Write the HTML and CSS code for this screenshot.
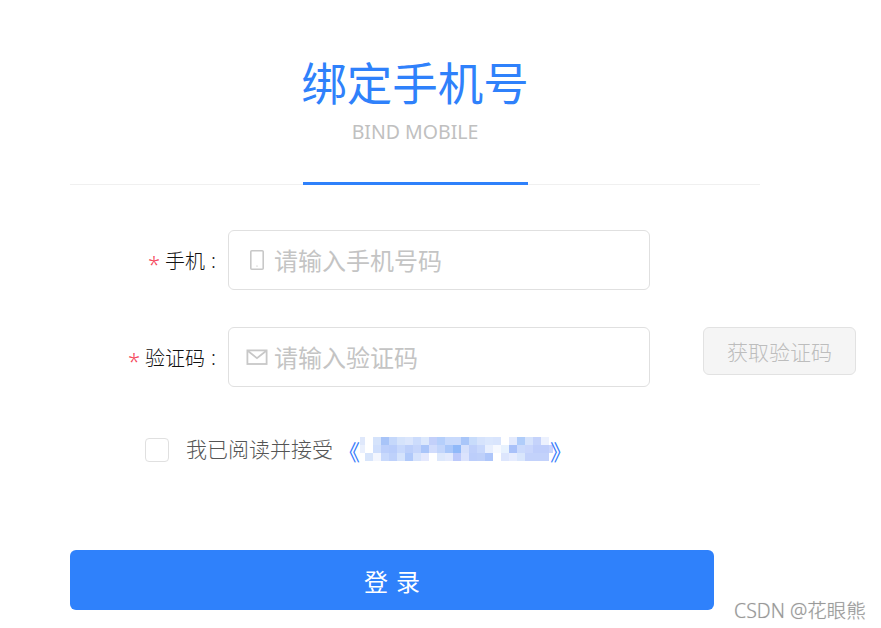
FILE: index.html
```html
<!DOCTYPE html>
<html lang="zh-CN">
<head>
  <meta charset="UTF-8">
  <title>绑定手机号</title>
  <link rel="stylesheet" href="styles.css">
</head>
<body>
  <div class="container">
    <div class="header">
      <div class="title-box">
        <h1>绑定手机号</h1>
        <p>BIND MOBILE</p>
      </div>
    </div>

    <form class="bind-form">
      <div class="form-row">
        <label class="form-label" for="mobile"><span class="required">*</span>手机<span class="colon">:</span></label>
        <div class="input-box">
          <svg class="input-icon" width="24" height="24" viewBox="0 0 24 24" fill="none" stroke="#c8c8c8" stroke-width="1.6">
            <rect x="5.8" y="2.8" width="12.4" height="18.4" rx="1"/>
            <circle cx="12" cy="18" r="0.6" fill="#b0b0b0" stroke="none"/>
          </svg>
          <input type="text" id="mobile" placeholder="请输入手机号码">
        </div>
      </div>

      <div class="form-row">
        <label class="form-label" for="code"><span class="required">*</span>验证码<span class="colon">:</span></label>
        <div class="input-box">
          <svg class="input-icon" width="24" height="24" viewBox="0 0 24 24" fill="none" stroke="#c8c8c8" stroke-width="1.8">
            <rect x="2.4" y="5.4" width="19.2" height="13.6"/>
            <path d="M2.7 5.8l9.3 7.4 9.3-7.4"/>
          </svg>
          <input type="text" id="code" placeholder="请输入验证码">
        </div>
        <button type="button" class="code-btn" disabled>获取验证码</button>
      </div>

      <div class="agree-row">
        <span class="checkbox"></span>
        <span class="agree-text">我已阅读并接受</span>
        <a class="agree-link"><span>《</span><svg class="mosaic" width="193" height="24" viewBox="0 0 193 24">
          <g>
            <rect x="0" y="0" width="5" height="8" fill="#dfe8fb"/><rect x="13" y="0" width="8" height="8" fill="#d5e3fb"/><rect x="21" y="0" width="8" height="8" fill="#a8c4f8"/><rect x="29" y="0" width="8" height="8" fill="#c5d8fb"/><rect x="37" y="0" width="8" height="8" fill="#d5e3fb"/><rect x="45" y="0" width="8" height="8" fill="#dbe6fc"/><rect x="53" y="0" width="8" height="8" fill="#ccdcfc"/><rect x="61" y="0" width="8" height="8" fill="#dce8fc"/><rect x="69" y="0" width="8" height="8" fill="#c3d0fa"/><rect x="77" y="0" width="8" height="8" fill="#b5cffb"/><rect x="85" y="0" width="8" height="8" fill="#c8dafc"/><rect x="93" y="0" width="8" height="8" fill="#c9dafc"/><rect x="101" y="0" width="8" height="8" fill="#a9c6f9"/><rect x="109" y="0" width="8" height="8" fill="#c8dcfb"/><rect x="117" y="0" width="8" height="8" fill="#d6e3fc"/><rect x="125" y="0" width="8" height="8" fill="#dbe7fd"/><rect x="133" y="0" width="8" height="8" fill="#d9e5fd"/><rect x="149" y="0" width="8" height="8" fill="#e3eafd"/><rect x="157" y="0" width="8" height="8" fill="#b0cdfa"/><rect x="165" y="0" width="8" height="8" fill="#d6e3fc"/><rect x="173" y="0" width="8" height="8" fill="#c5d3fb"/><rect x="181" y="0" width="8" height="8" fill="#ecf1fe"/>
          </g>
          <g>
            <rect x="0" y="8" width="5" height="8" fill="#eaf0fd"/><rect x="13" y="8" width="8" height="8" fill="#d0dffc"/><rect x="21" y="8" width="8" height="8" fill="#bccffb"/><rect x="29" y="8" width="8" height="8" fill="#b9cdfb"/><rect x="37" y="8" width="8" height="8" fill="#c7d8fc"/><rect x="45" y="8" width="8" height="8" fill="#bccffa"/><rect x="53" y="8" width="8" height="8" fill="#c5d5fb"/><rect x="61" y="8" width="8" height="8" fill="#aac5f9"/><rect x="69" y="8" width="8" height="8" fill="#d1dcfc"/><rect x="77" y="8" width="8" height="8" fill="#c2d5fb"/><rect x="85" y="8" width="8" height="8" fill="#a9c7fa"/><rect x="93" y="8" width="8" height="8" fill="#90b9f9"/><rect x="101" y="8" width="8" height="8" fill="#d5e0fc"/><rect x="109" y="8" width="8" height="8" fill="#bfd0fb"/><rect x="117" y="8" width="8" height="8" fill="#c8d8fc"/><rect x="125" y="8" width="8" height="8" fill="#e8effe"/><rect x="133" y="8" width="8" height="8" fill="#f6f9ff"/><rect x="141" y="8" width="8" height="8" fill="#e8f2fe"/><rect x="149" y="8" width="8" height="8" fill="#a9c1f9"/><rect x="157" y="8" width="8" height="8" fill="#cbdafc"/><rect x="165" y="8" width="8" height="8" fill="#c9d6fc"/><rect x="173" y="8" width="16" height="8" fill="#bfcefb"/><rect x="189" y="8" width="4" height="8" fill="#c9d5fc"/>
          </g>
          <g>
            <rect x="5" y="16" width="8" height="8" fill="#d8e5fb"/><rect x="13" y="16" width="8" height="8" fill="#f3f6fe"/><rect x="21" y="16" width="8" height="8" fill="#c8d9fc"/><rect x="29" y="16" width="8" height="8" fill="#bed1fb"/><rect x="37" y="16" width="8" height="8" fill="#d5e3fc"/><rect x="45" y="16" width="8" height="8" fill="#b0c9fa"/><rect x="53" y="16" width="8" height="8" fill="#d5e2fc"/><rect x="61" y="16" width="8" height="8" fill="#e4e8fd"/><rect x="77" y="16" width="8" height="8" fill="#dde8fc"/><rect x="85" y="16" width="8" height="8" fill="#e3eafd"/><rect x="93" y="16" width="8" height="8" fill="#bcc9fb"/><rect x="101" y="16" width="8" height="8" fill="#dbe3fd"/><rect x="109" y="16" width="8" height="8" fill="#bccefb"/><rect x="117" y="16" width="8" height="8" fill="#bed0fa"/><rect x="125" y="16" width="8" height="8" fill="#aec6fa"/><rect x="141" y="16" width="8" height="8" fill="#dde6fd"/><rect x="149" y="16" width="8" height="8" fill="#e6ecfe"/><rect x="157" y="16" width="8" height="8" fill="#d9e6fc"/><rect x="165" y="16" width="24" height="8" fill="#c3d2fb"/>
          </g>
        </svg><span>》</span></a>
      </div>

      <button type="button" class="login-btn">登录</button>
    </form>
  </div>

  <div class="watermark">CSDN @花眼熊</div>
</body>
</html>
```

FILE: styles.css
```css
* {
  box-sizing: border-box;
}
html, body {
  height: 628px;
  overflow: hidden;
}
body {
  font-family: "Noto Sans", "Noto Sans CJK SC", Arial, sans-serif;
  background-color: #fff;
  color: #333;
  margin: 0;
  padding: 0;
}
.container {
  width: 690px;
  margin-left: 70px;
}
.header {
  height: 185px;
  border-bottom: 1px solid #f0f0f0;
  display: flex;
  justify-content: center;
  padding-top: 51px;
}
.title-box {
  width: 225px;
  height: 134px;
  text-align: center;
  border-bottom: 3px solid #2f81fb;
}
.title-box h1 {
  margin: 0 -3px;
  font-size: 45.5px;
  line-height: 64px;
  font-weight: 400;
  color: #2f81fb;
  white-space: nowrap;
}
.title-box p {
  margin: 2px 0 0;
  font-size: 19.5px;
  line-height: 30px;
  font-weight: 400;
  color: #c0c0c0;
}
.bind-form {
  padding-top: 45px;
}
.form-row {
  display: flex;
  align-items: flex-start;
  margin-bottom: 37px;
  width: 800px;
}
.form-label {
  flex: none;
  width: 158px;
  height: 60px;
  padding-right: 12px;
  display: flex;
  align-items: center;
  justify-content: flex-end;
  font-size: 20px;
  font-weight: 300;
  color: #111;
}
.required {
  color: #f5475b;
  margin-right: 5px;
  font-size: 22px;
  line-height: 22px;
  padding-top: 5px;
}
.colon {
  margin-left: 6px;
}
.input-box {
  flex: none;
  width: 422px;
  height: 60px;
  border: 1px solid #e0e0e0;
  border-radius: 6px;
  display: flex;
  align-items: center;
  padding-left: 16px;
}
.input-icon {
  flex: none;
  margin-right: 5px;
}
.input-box input {
  flex: 1;
  min-width: 0;
  border: none;
  outline: none;
  padding: 0;
  font-family: inherit;
  font-size: 24px;
  font-weight: 400;
  color: #333;
}
.input-box input::placeholder {
  color: #c4c4c4;
  opacity: 1;
}
.code-btn {
  flex: none;
  width: 153px;
  height: 48px;
  margin-left: 53px;
  border: 1px solid #e2e2e2;
  border-radius: 6px;
  background-color: #f5f5f5;
  font-family: inherit;
  font-size: 21px;
  font-weight: 300;
  color: #bdbdbd;
}
.agree-row {
  display: flex;
  align-items: center;
  height: 24px;
  margin-top: 51px;
  margin-left: 75px;
}
.checkbox {
  width: 24px;
  height: 24px;
  border: 1px solid #e0e0e0;
  border-radius: 4px;
  margin-right: 17px;
}
.agree-text {
  font-size: 21px;
  line-height: 24px;
  margin-top: -2px;
  font-weight: 300;
  color: #555;
}
.agree-link {
  display: flex;
  align-items: center;
  margin-left: 5px;
  font-size: 22px;
  color: #3a7dfb;
}
.mosaic {
  flex: none;
  display: block;
  margin-top: -2px;
}
.agree-link span:last-child {
  margin-left: -3px;
}
.login-btn {
  display: block;
  width: 644px;
  height: 60px;
  margin-top: 88px;
  padding-left: 14px;
  border: none;
  border-radius: 6px;
  background-color: #2f81fb;
  font-family: inherit;
  font-size: 24px;
  letter-spacing: 8px;
  color: #fff;
}
.watermark {
  position: absolute;
  left: 734px;
  top: 598px;
  font-size: 19.5px;
  line-height: 26px;
  font-weight: 300;
  color: #999;
  text-shadow: 0 0 1px #ccc;
}
```
